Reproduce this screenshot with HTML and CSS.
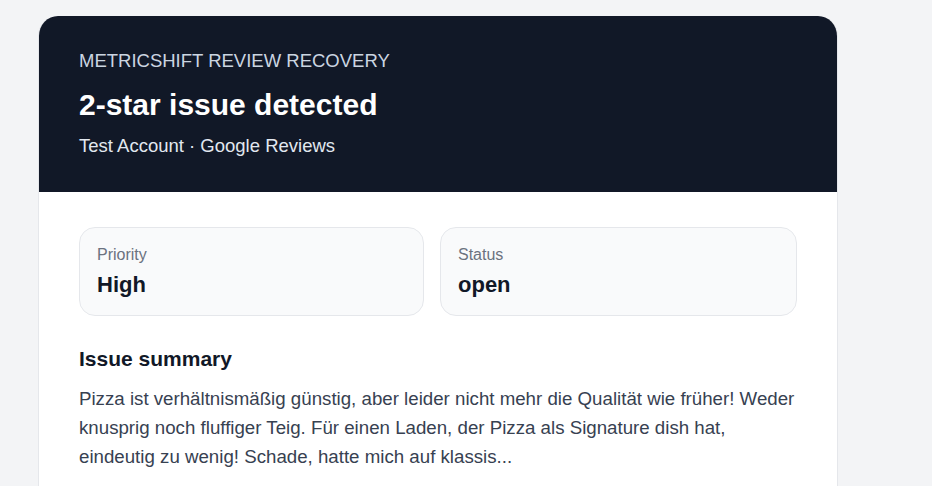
FILE: index.html
```html
<!DOCTYPE html>
<html lang="en">
<head>
    <meta charset="UTF-8">
    <meta name="viewport" content="width=device-width, initial-scale=1.0">
    <title>MetricShift Review Recovery</title>
    <link rel="stylesheet" href="styles.css">
</head>
<body>
    <div class="page">
        <div class="card">
            <!-- Header -->
            <div class="card-header">
                <p class="eyebrow">METRICSHIFT REVIEW RECOVERY</p>
                <h1 class="title">2-star issue detected</h1>
                <p class="subtitle">Test Account · Google Reviews</p>
            </div>

            <!-- Body -->
            <div class="card-body">
                <div class="metrics">
                    <div class="metric">
                        <div class="metric-label">Priority</div>
                        <div class="metric-value">High</div>
                    </div>
                    <div class="metric metric-wide">
                        <div class="metric-label">Status</div>
                        <div class="metric-value">open</div>
                    </div>
                </div>

                <h2 class="section-title">Issue summary</h2>
                <p class="summary">Pizza ist verhältnismäßig günstig, aber leider nicht mehr die Qualität wie früher! Weder knusprig noch fluffiger Teig. Für einen Laden, der Pizza als Signature dish hat, eindeutig zu wenig! Schade, hatte mich auf klassis...</p>
            </div>
        </div>
    </div>
</body>
</html>
```

FILE: styles.css
```css
/* Global Styles */
* {
    box-sizing: border-box;
    font-family: 'Liberation Sans', Arial, Helvetica, sans-serif;
}

body {
    margin: 0;
    background: #f3f4f6;
}

.page {
    padding: 16px 0 0 38px;
}

.card {
    width: 800px;
    background: white;
    border: 1px solid #e5e7eb;
    border-top: none;
    border-radius: 20px;
    overflow: hidden;
}

/* Header */
.card-header {
    background: #111827;
    padding: 34px 40px 35px;
}

.eyebrow {
    margin: 0;
    font-size: 18.5px;
    color: #cbd5e1;
}

.title {
    margin: 16px 0 0;
    font-size: 30px;
    font-weight: 700;
    color: white;
}

.subtitle {
    margin: 13px 0 0;
    font-size: 18.5px;
    color: #e2e8f0;
}

/* Body */
.card-body {
    padding: 35px 40px 40px;
}

.metrics {
    display: grid;
    grid-template-columns: 345fr 357fr;
    gap: 16px;
}

.metric {
    background: #f9fafb;
    border: 1px solid #e5e7eb;
    border-radius: 16px;
    padding: 18px 17px 17px;
}

.metric-label {
    font-size: 16px;
    color: #6b7280;
}

.metric-value {
    margin-top: 8px;
    font-size: 22px;
    font-weight: 700;
    color: #111827;
}

.section-title {
    margin: 31px 0 0;
    font-size: 21px;
    font-weight: 700;
    color: #111827;
}

.summary {
    margin: 13px 0 0;
    font-size: 18.7px;
    line-height: 1.56;
    color: #374151;
}
```
